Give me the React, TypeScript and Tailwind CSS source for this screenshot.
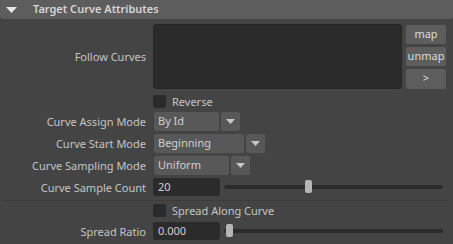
import React from "react";

const font = { fontFamily: '"Noto Sans", "Open Sans", sans-serif' };

function Label({ children }: { children: React.ReactNode }) {
  return (
    <div className="w-[146px] shrink-0 pr-0 text-right text-[11px] text-[#c4c4c4] leading-none">
      {children}
    </div>
  );
}

function Dropdown({ value, width }: { value: string; width: string }) {
  return (
    <div className="flex h-[19px] gap-[2px]">
      <div
        className={`${width} flex items-center rounded-[2px] bg-[#585858] pl-[4px] text-[11px] text-[#d0d0d0]`}
      >
        {value}
      </div>
      <div className="flex w-[19px] items-center justify-center rounded-[2px] bg-[#585858]">
        <svg width="9" height="5" viewBox="0 0 9 5">
          <path d="M0 0 L9 0 L4.5 5 Z" fill="#c8c8c8" />
        </svg>
      </div>
    </div>
  );
}

function Check({ label }: { label: string }) {
  return (
    <div className="flex items-center">
      <div className="ml-[153px] h-[13px] w-[13px] rounded-[2px] bg-[#2b2b2b]" />
      <span className="ml-[6px] text-[11px] text-[#c4c4c4] leading-none">{label}</span>
    </div>
  );
}

function SliderRow({ label, value, thumb }: { label: string; value: string; thumb: number }) {
  return (
    <div className="flex w-full items-center">
      <Label>{label}</Label>
      <div className="ml-[7px] flex h-[18px] w-[67px] items-center rounded-[2px] bg-[#2b2b2b] pl-[5px] text-[11px] text-[#d0d0d0]">
        {value}
      </div>
      <div className="relative ml-[4px] mr-[10px] h-[4px] flex-1 rounded-full bg-[#2b2b2b]">
        <div
          className="absolute top-[-5px] h-[13px] w-[7px] rounded-[2px] bg-[#b5b5b5]"
          style={{ left: thumb }}
        />
      </div>
    </div>
  );
}

export default function App() {
  return (
    <div className="h-[244px] w-[453px] overflow-hidden bg-[#444444]" style={font}>
      {/* header */}
      <div className="flex h-[19px] items-center rounded-b-[3px] bg-[#5d5d5d]">
        <svg className="ml-[6px]" width="11" height="6" viewBox="0 0 11 6">
          <path d="M0 0 L11 0 L5.5 6 Z" fill="#e6e6e6" />
        </svg>
        <span className="ml-[16px] text-[11px] font-semibold text-[#d6d6d6]">Target Curve Attributes</span>
      </div>

      {/* follow curves */}
      <div className="mt-[5px] flex h-[65px] items-center">
        <Label>Follow Curves</Label>
        <div className="ml-[7px] h-full w-[249px] rounded-[3px] border border-[#262626] bg-[#2b2b2b]" />
        <div className="ml-[4px] flex w-[40px] flex-col gap-[3px]">
          <div className="flex h-[19px] items-center justify-center rounded-[2px] bg-[#5d5d5d] text-[11px] text-[#dcdcdc]">map</div>
          <div className="flex h-[19px] items-center justify-center rounded-[2px] bg-[#5d5d5d] text-[11px] text-[#dcdcdc]">unmap</div>
          <div className="flex h-[20px] items-center justify-center rounded-[2px] bg-[#5d5d5d] text-[11px] text-[#dcdcdc]">&gt;</div>
        </div>
      </div>

      <div className="mt-[6px] h-[13px]">
        <Check label="Reverse" />
      </div>

      <div className="mt-[2px] flex flex-col">
        <div className="flex h-[22px] items-center">
          <Label>Curve Assign Mode</Label>
          <div className="ml-[8px]">
            <Dropdown value="By Id" width="w-[65px]" />
          </div>
        </div>
        <div className="flex h-[22px] items-center">
          <Label>Curve Start Mode</Label>
          <div className="ml-[8px]">
            <Dropdown value="Beginning" width="w-[90px]" />
          </div>
        </div>
        <div className="flex h-[22px] items-center">
          <Label>Curve Sampling Mode</Label>
          <div className="ml-[8px]">
            <Dropdown value="Uniform" width="w-[75px]" />
          </div>
        </div>
        <div className="flex h-[22px] items-center">
          <SliderRow label="Curve Sample Count" value="20" thumb={81} />
        </div>
      </div>

      <div className="mx-[5px] mt-[2px] border-t border-[#3c3c3c]" />

      <div className="mt-[3px] h-[13px]">
        <Check label="Spread Along Curve" />
      </div>

      <div className="mt-[4px] flex h-[20px] items-center">
        <SliderRow label="Spread Ratio" value="0.000" thumb={2} />
      </div>
    </div>
  );
}
